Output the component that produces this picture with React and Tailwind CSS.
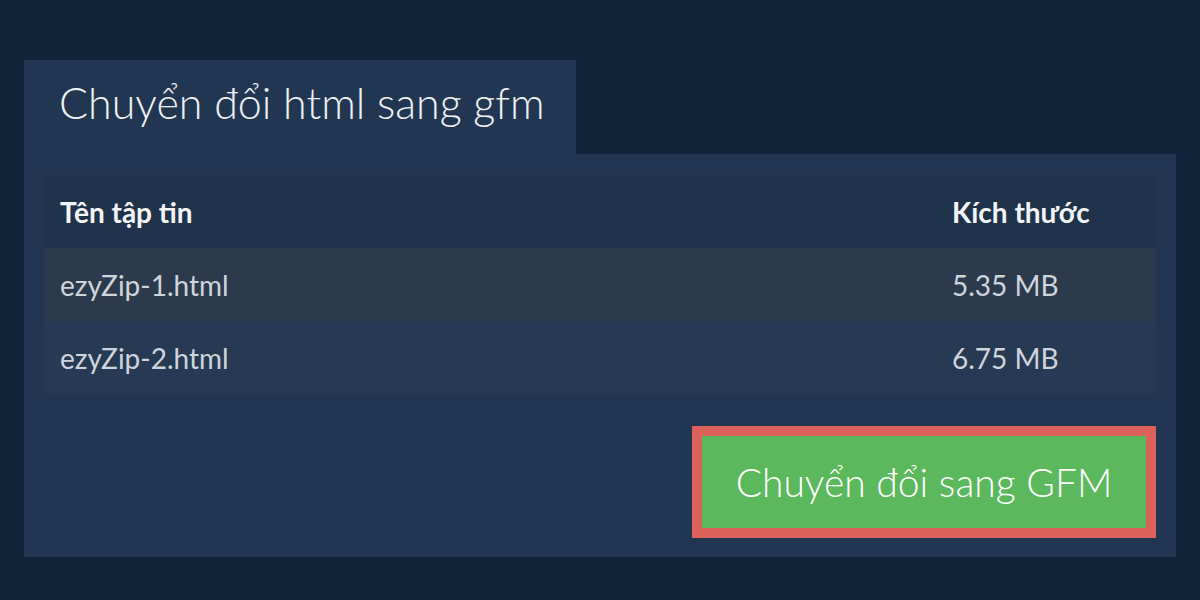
const files = [
  { name: "ezyZip-1.html", size: "5.35 MB" },
  { name: "ezyZip-2.html", size: "6.75 MB" },
];

const App = () => {
  return (
    <div className="w-[1200px] h-[600px] bg-[#0f2339] font-['Lato','Liberation_Sans',sans-serif] pt-[60px] px-6">
      <div className="w-[552px] h-[94px] bg-[#213751] pl-[35px] pt-[16px]">
        <h1 className="text-[43px] font-light leading-[54px] text-[#eef1f4]">Chuyển đổi html sang gfm</h1>
      </div>
      <div className="bg-[#213751] h-[403px] px-5 pt-[21px]">
        <div className="w-full">
          <div className="grid grid-cols-[1fr_220px] h-[73px] items-center bg-[#1f334a] text-[28px] font-bold text-[#f2f4f6]">
            <div className="pl-4">Tên tập tin</div>
            <div className="pl-4">Kích thước</div>
          </div>
          {files.map((f, i) => (
            <div
              key={f.name}
              className={
                i % 2 === 0
                  ? "grid grid-cols-[1fr_220px] h-[74px] items-center bg-[#2b3b4d] text-[28px] text-[#cfd5dc]"
                  : "grid grid-cols-[1fr_220px] h-[71px] items-center bg-[#263b53] text-[28px] text-[#cfd5dc]"
              }
            >
              <div className="pl-4">{f.name}</div>
              <div className="pl-4">{f.size}</div>
            </div>
          ))}
        </div>
        <div className="flex justify-end mt-[33px]">
          <button className="w-[464px] h-[112px] border-[10px] border-[#dc605c] bg-[#5cb85c] text-[39px] font-light text-white">
            Chuyển đổi sang GFM
          </button>
        </div>
      </div>
    </div>
  );
};

export default App;
